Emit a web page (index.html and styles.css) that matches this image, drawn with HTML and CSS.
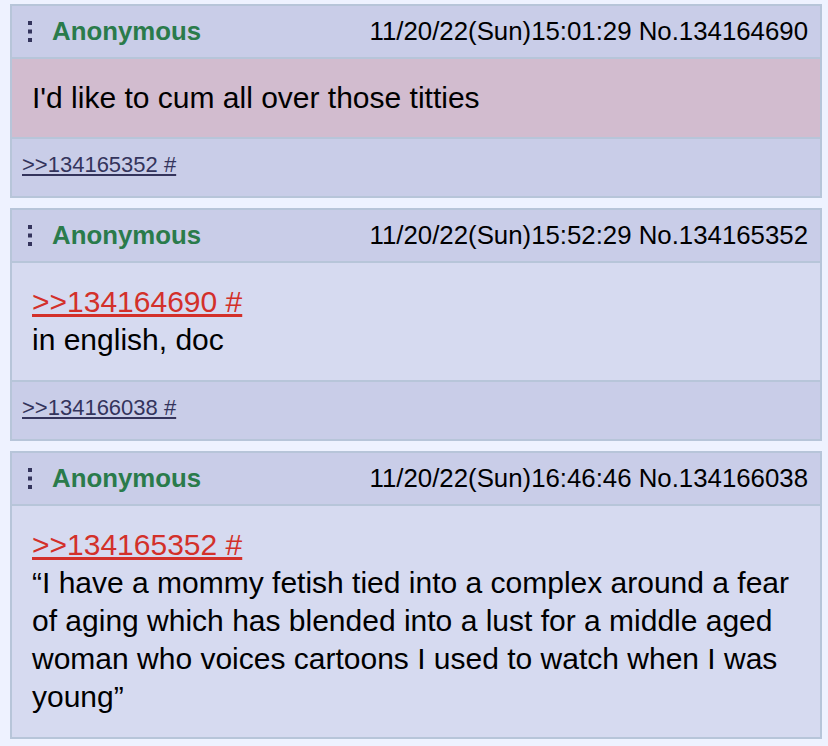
FILE: index.html
```html
<!DOCTYPE html>
<html>
<head>
<meta charset="utf-8">
<link rel="stylesheet" href="styles.css">
</head>
<body>
<div class="thread">
  <div class="post">
    <div class="post-head">
      <svg class="menu" width="4" height="21" viewBox="0 0 4 21"><rect x="0" y="0" width="4" height="4"/><rect x="0" y="8.5" width="4" height="4"/><rect x="0" y="17" width="4" height="4"/></svg>
      <span class="name">Anonymous</span>
      <span class="date">11/20/22(Sun)15:01:29 No.134164690</span>
    </div>
    <div class="post-body highlight">I'd like to cum all over those titties</div>
    <div class="post-foot"><a class="backlink" href="#">&gt;&gt;134165352 #</a></div>
  </div>

  <div class="post">
    <div class="post-head">
      <svg class="menu" width="4" height="21" viewBox="0 0 4 21"><rect x="0" y="0" width="4" height="4"/><rect x="0" y="8.5" width="4" height="4"/><rect x="0" y="17" width="4" height="4"/></svg>
      <span class="name">Anonymous</span>
      <span class="date">11/20/22(Sun)15:52:29 No.134165352</span>
    </div>
    <div class="post-body"><a class="quotelink" href="#">&gt;&gt;134164690 #</a><br>in english, doc</div>
    <div class="post-foot"><a class="backlink" href="#">&gt;&gt;134166038 #</a></div>
  </div>

  <div class="post">
    <div class="post-head">
      <svg class="menu" width="4" height="21" viewBox="0 0 4 21"><rect x="0" y="0" width="4" height="4"/><rect x="0" y="8.5" width="4" height="4"/><rect x="0" y="17" width="4" height="4"/></svg>
      <span class="name">Anonymous</span>
      <span class="date">11/20/22(Sun)16:46:46 No.134166038</span>
    </div>
    <div class="post-body"><a class="quotelink" href="#">&gt;&gt;134165352 #</a><br>“I have a mommy fetish tied into a complex around a fear of aging which has blended into a lust for a middle aged woman who voices cartoons I used to watch when I was young”</div>
  </div>
</div>
</body>
</html>
```

FILE: styles.css
```css
html, body {
  margin: 0;
  padding: 0;
  background: #eef2ff;
}

body {
  font-family: "Liberation Sans", Arial, sans-serif;
  color: #000;
}

.thread {
  padding: 4px 6px 0 10px;
  display: flex;
  flex-direction: column;
  gap: 10px;
}

.post {
  border: 2px solid #b7c5d9;
  background: #d6daf0;
}

.post-head {
  display: flex;
  align-items: center;
  height: 51px;
  padding: 0 12px 0 16px;
  background: #c9cde8;
  border-bottom: 2px solid #b7c5d9;
  font-size: 25.8px;
}

.menu {
  fill: #34345c;
  flex: none;
}

.name {
  margin-left: 20px;
  font-weight: bold;
  color: #2a7b4b;
}

.date {
  margin-left: auto;
}

.post-body {
  padding: 20px;
  font-size: 30px;
  line-height: 38.2px;
  background: #d6daf0;
}

.post-body.highlight {
  background: #d2bccf;
}

.quotelink {
  color: #d3302a;
  text-decoration: underline;
}

.post-foot {
  height: 59px;
  box-sizing: border-box;
  padding: 13px 10px 0 10px;
  background: #c9cde8;
  border-top: 2px solid #b7c5d9;
  font-size: 22px;
}

.backlink {
  color: #34345c;
  text-decoration: underline;
}
```
